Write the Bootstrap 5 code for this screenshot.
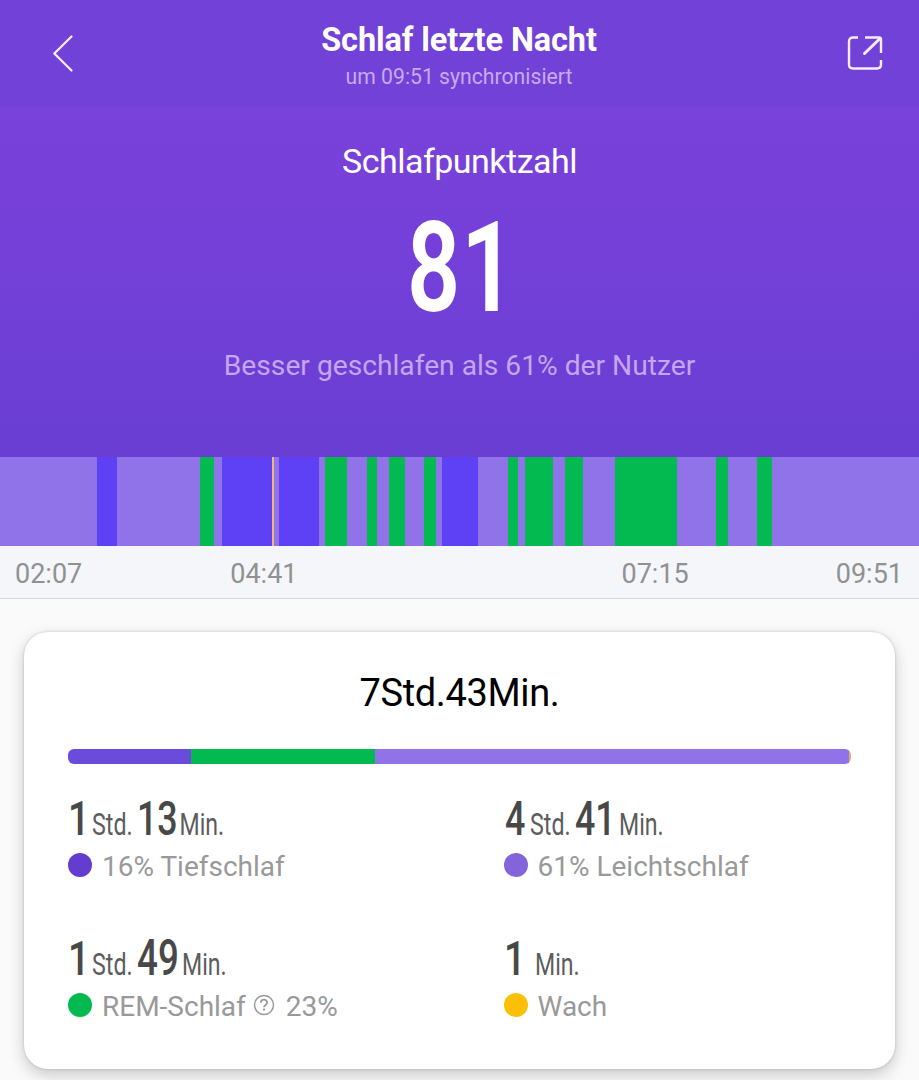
<!DOCTYPE html>
<html lang="de">
<head>
<meta charset="utf-8">
<meta name="viewport" content="width=device-width, initial-scale=1">
<title>Schlaf letzte Nacht</title>
<link href="https://cdn.jsdelivr.net/npm/bootstrap@5.3.0/dist/css/bootstrap.min.css" rel="stylesheet">
<style>
body{font-family:Roboto,"Liberation Sans",sans-serif;background:#fafafa;width:919px;height:1080px;overflow:hidden}
svg{display:block;overflow:visible}
.topbar{height:107px;background:#7241d8;padding:20px 36px 0 52px}
.topbar>svg{margin-top:15px}
.title-block{margin-right:3px}
.title-main{font-size:32.5px;line-height:40px;font-weight:700;letter-spacing:-.1px;white-space:nowrap;margin:0}
.title-sub{font-size:21.2px;line-height:34px;color:#c9a9f4;white-space:nowrap}
.hero{height:350px;background:linear-gradient(#7942da,#7540d9 35%,#693ed3);padding-top:32px}
.hero-name{font-size:34px;line-height:44px;letter-spacing:-.5px}
.hero-note{font-size:28.2px;line-height:36px;color:#c5a6f2}
.phases{height:89px}
.light-sleep{background:#9073e9}
.deep-sleep{background:#5e40f5}
.rem-sleep{background:#03ba50}
.awake{background:#f0b878}
.axis{height:53px;background:#f5f6f9;border-bottom:1px solid #d5d6da;color:#909193;font-size:27px;line-height:56px;padding:0 16px 0 15px}
.sleep-card{margin:33px 24px 0;height:437px;border:0;border-radius:24px;box-shadow:0 6px 16px rgba(0,0,0,.2),0 0 3px rgba(0,0,0,.18);padding:37px 44px 0}
.total{font-size:38px;line-height:48px;letter-spacing:-.35px;color:#000}
.split{height:16px;border-radius:6px;margin-top:32px;overflow:hidden}
.stats{margin-top:25px}
.stat{height:140px}
.stat-num{fill:#484848;font-size:49px;font-weight:530}
.stat-unit{fill:#5c5c5c;font-size:31px}
.stat-label{font-size:28px;line-height:34px;color:#999;margin-top:6px;white-space:nowrap}
.dot{width:24px;height:24px;border-radius:50%;margin-right:10px;margin-top:-4px}
</style>
</head>
<body>
<header class="topbar d-flex justify-content-between text-white">
  <svg width="22" height="38" viewBox="0 0 22 38"><path d="M19.500 1.500 2.300 18.500 19.500 35.500" fill="none" stroke="#f7edff" stroke-width="2.3" stroke-linecap="round" stroke-linejoin="round"/></svg>
  <div class="title-block text-center">
    <h1 class="title-main">Schlaf letzte Nacht</h1>
    <div class="title-sub">um 09:51 synchronisiert</div>
  </div>
  <svg width="36" height="36" viewBox="0 0 36 36"><path d="M11 2.500H6Q2 2.500 2 6.500V29.500Q2 33.500 6 33.500H30Q34 33.500 34 29.500V25M18 2.500H32Q34 2.500 34 4.500V18" fill="none" stroke="#f7edff" stroke-width="2.400"/><path d="M33 3.500 17.500 18.500" fill="none" stroke="#f7edff" stroke-width="3" stroke-linecap="round"/></svg>
</header>
<section class="hero text-white text-center">
  <div class="hero-name">Schlafpunktzahl</div>
  <svg class="mx-auto" width="100" height="130" viewBox="0 0 100 130"><g fill="#fff" font-size="126" font-weight="600" text-anchor="start"><text transform="translate(-3 128) scale(.74 1)">8</text><text transform="translate(51 128) scale(.76 1)">1</text></g></svg>
  <div class="hero-note" style="margin-top:35px">Besser geschlafen als 61% der Nutzer</div>
</section>
<div class="phases light-sleep d-flex" id="phases"></div>
<div class="axis d-flex"><span>02:07</span><span style="margin-left:148px">04:41</span><span class="ms-auto" style="margin-right:147px">07:15</span><span>09:51</span></div>
<main class="card sleep-card">
  <div class="total text-center">7Std.43Min.</div>
  <div class="split d-flex"><div style="width:123px;background:#6a4bdc"></div><div class="rem-sleep" style="width:184px"></div><div class="light-sleep" style="width:474px"></div><div style="width:2px;background:#e2ad70"></div></div>
  <div class="stats row g-0">
    <div class="stat col-auto" style="width:435.5px">
      <svg width="200" height="55"><g class="stat-num"><text transform="translate(0 46) scale(.78 1)">1</text><text transform="translate(69 46) scale(.73 1)">13</text></g><g class="stat-unit"><text transform="translate(24 46) scale(.75 1)">Std.</text><text transform="translate(111.500 46) scale(.745 1)">Min.</text></g></svg>
      <div class="stat-label d-flex align-items-center"><span class="dot" style="background:#633dcf"></span>16% Tiefschlaf</div>
    </div>
    <div class="stat col">
      <svg width="200" height="55"><g class="stat-num"><text transform="translate(1 46) scale(.73 1)">4</text><text transform="translate(71 46) scale(.73 1)">41</text></g><g class="stat-unit"><text transform="translate(26 46) scale(.75 1)">Std.</text><text transform="translate(115 46) scale(.745 1)">Min.</text></g></svg>
      <div class="stat-label d-flex align-items-center"><span class="dot" style="background:#8464db"></span>61% Leichtschlaf</div>
    </div>
    <div class="w-100"></div>
    <div class="stat col-auto" style="width:435.5px">
      <svg width="200" height="55"><g class="stat-num"><text transform="translate(0 46) scale(.78 1)">1</text><text transform="translate(69 46) scale(.75 1)">49</text></g><g class="stat-unit"><text transform="translate(24 46) scale(.75 1)">Std.</text><text transform="translate(114 46) scale(.745 1)">Min.</text></g></svg>
      <div class="stat-label d-flex align-items-center"><span class="dot rem-sleep"></span>REM-Schlaf
        <svg width="22" height="22" viewBox="0 0 22 22" style="margin:-5px 11px 0 7px"><circle cx="11" cy="11" r="9.500" fill="none" stroke="#999" stroke-width="1.500"/><path d="M7.800 8.800C7.800 4.700 14.200 4.700 14.200 8.600C14.200 11 11 10.900 11 13.300" fill="none" stroke="#999" stroke-width="1.700"/><circle cx="11" cy="15.700" r="1.100" fill="#999"/></svg>23%</div>
    </div>
    <div class="stat col">
      <svg width="200" height="55"><g class="stat-num"><text transform="translate(0 46) scale(.78 1)">1</text></g><g class="stat-unit"><text transform="translate(31 46) scale(.745 1)">Min.</text></g></svg>
      <div class="stat-label d-flex align-items-center"><span class="dot" style="background:#fbc005"></span>Wach</div>
    </div>
  </div>
</main>
<script src="https://cdn.jsdelivr.net/npm/bootstrap@5.3.0/dist/js/bootstrap.bundle.min.js"></script>
<script>
// Sleep phases of the night: [start, end, phase]; gaps are light sleep
const phases=[[97,117,'deep-sleep'],[200,214,'rem-sleep'],[222,272,'deep-sleep'],[272,274,'awake'],[279.5,319,'deep-sleep'],[325,347,'rem-sleep'],[367,377,'rem-sleep'],[389,405,'rem-sleep'],[424,436.5,'rem-sleep'],[442,478,'deep-sleep'],[508,518,'rem-sleep'],[525.5,553.5,'rem-sleep'],[565.5,583.5,'rem-sleep'],[615,677,'rem-sleep'],[716,728,'rem-sleep'],[757.5,772,'rem-sleep']];
let end=0;
for(const [a,b,name] of phases){
  const el=document.createElement('div');
  el.className=name;
  el.style.width=(b-a)/9.19+'%';
  el.style.marginLeft=(a-end)/9.19+'%';
  document.getElementById('phases').append(el);
  end=b;
}
</script>
</body>
</html>
